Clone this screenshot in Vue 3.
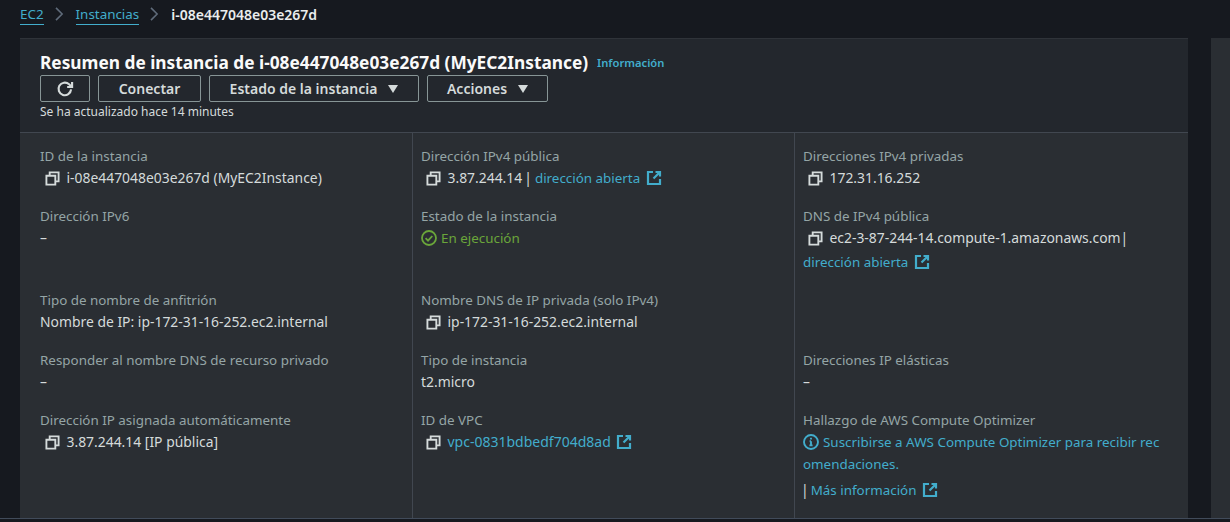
<script setup>
const columns = [
  [
    { label: 'ID de la instancia', value: 'i-08e447048e03e267d (MyEC2Instance)', copy: true },
    { label: 'Dirección IPv6', value: '–' },
    { label: 'Tipo de nombre de anfitrión', value: 'Nombre de IP: ip-172-31-16-252.ec2.internal' },
    { label: 'Responder al nombre DNS de recurso privado', value: '–' },
    { label: 'Dirección IP asignada automáticamente', value: '3.87.244.14 [IP pública]', copy: true },
  ],
  [
    { label: 'Dirección IPv4 pública', value: '3.87.244.14', copy: true, sep: true, link: 'dirección abierta' },
    { label: 'Estado de la instancia', status: 'En ejecución' },
    { label: 'Nombre DNS de IP privada (solo IPv4)', value: 'ip-172-31-16-252.ec2.internal', copy: true },
    { label: 'Tipo de instancia', value: 't2.micro' },
    { label: 'ID de VPC', copy: true, id: 'vpc-0831bdbedf704d8ad' },
  ],
  [
    { label: 'Direcciones IPv4 privadas', value: '172.31.16.252', copy: true },
    { label: 'DNS de IPv4 pública', value: 'ec2-3-87-244-14.compute-1.amazonaws.com', copy: true, sep: true, below: 'dirección abierta' },
    { empty: true },
    { label: 'Direcciones IP elásticas', value: '–' },
    { label: 'Hallazgo de AWS Compute Optimizer', optimizer: true },
  ],
]
</script>

<template>
  <div class="page">
    <nav class="crumbs">
      <a class="crumb">EC2</a>
      <svg class="chev" viewBox="0 0 10 16"><path d="M1 1l7 7-7 7" /></svg>
      <a class="crumb">Instancias</a>
      <svg class="chev" viewBox="0 0 10 16"><path d="M1 1l7 7-7 7" /></svg>
      <span class="current">i-08e447048e03e267d</span>
    </nav>

    <div class="main">
      <section class="card">
        <header class="head">
          <div class="title-row">
            <h1>Resumen de instancia de i-08e447048e03e267d (MyEC2Instance)</h1>
            <a class="info">Información</a>
          </div>
          <div class="actions">
            <button class="btn refresh" aria-label="Actualizar">
              <svg viewBox="0 0 16 16" width="18" height="18"><path d="M13.4 8.4A5.6 5.6 0 1 1 11.6 3.8L14 6" /><path d="M14.3 1.8V6.2H9.9" /></svg>
            </button>
            <button class="btn connect">Conectar</button>
            <button class="btn state">Estado de la instancia<i class="caret"></i></button>
            <button class="btn acts">Acciones<i class="caret"></i></button>
          </div>
          <p class="updated">Se ha actualizado hace 14 minutes</p>
        </header>

        <div class="details">
          <div v-for="(col, c) in columns" :key="c" class="col" :class="'col' + c">
            <div v-for="(f, i) in col" :key="i" class="field">
              <template v-if="!f.empty">
                <div class="label">{{ f.label }}</div>
                <div v-if="f.status" class="value status">
                  <svg viewBox="0 0 16 16" width="16" height="16"><circle cx="8" cy="8" r="7" /><path d="M4.6 8.2l2.4 2.4 4.3-4.6" /></svg>
                  {{ f.status }}
                </div>
                <template v-else-if="f.optimizer">
                  <div class="value link-line">
                    <svg class="info-ico" viewBox="0 0 16 16" width="16" height="16"><circle cx="8" cy="8" r="7" /><path d="M8 7.2v4M6.4 11.4h3.2M6.6 7.2H8" /><path d="M8 3.8v1.8" /></svg>
                    Suscribirse a AWS Compute Optimizer para recibir rec
                  </div>
                  <div class="value link-line second">omendaciones.</div>
                  <div class="value more">
                    <span class="bar">|</span><a class="link">Más información</a>
                    <svg class="ext" viewBox="0 0 16 16" width="16" height="16"><path d="M7 2H2v12h12V9" /><path d="M9.5 2H14v4.5M14 2L7.5 8.5" /></svg>
                  </div>
                </template>
                <template v-else>
                  <div class="value">
                    <svg v-if="f.copy" class="copy" viewBox="0 0 16 16" width="15" height="15"><path d="M1.5 5h9.5v9.5H1.5z" /><path d="M5 5V1.5h9.5V11H11" /></svg>
                    <span v-if="f.value">{{ f.value }}</span>
                    <span v-if="f.sep" class="bar" :class="{ spaced: f.link }">|</span>
                    <a v-if="f.link" class="link pad">{{ f.link }}</a>
                    <a v-if="f.id" class="link id">{{ f.id }}</a>
                    <svg v-if="f.link || f.id" class="ext" viewBox="0 0 16 16" width="16" height="16"><path d="M7 2H2v12h12V9" /><path d="M9.5 2H14v4.5M14 2L7.5 8.5" /></svg>
                  </div>
                  <div v-if="f.below" class="value below">
                    <a class="link">{{ f.below }}</a>
                    <svg class="ext" viewBox="0 0 16 16" width="16" height="16"><path d="M7 2H2v12h12V9" /><path d="M9.5 2H14v4.5M14 2L7.5 8.5" /></svg>
                  </div>
                </template>
              </template>
            </div>
          </div>
        </div>
      </section>
      <div class="gutter"></div>
      <div class="rail"></div>
    </div>
    <div class="bottom"></div>
  </div>
</template>

<style scoped>
.page {
  width: 1230px;
  height: 522px;
  overflow: hidden;
  background: #16191f;
  font-family: "Noto Sans", "Open Sans", sans-serif;
  font-size: 14px;
  color: #d5dbdb;
}

.crumbs {
  height: 38px;
  padding: 0 0 10px 20px;
  box-sizing: border-box;
  display: flex;
  align-items: center;
}

.crumb {
  color: #42adcc;
  font-size: 13.4px;
  line-height: 20px;
  border-bottom: 1px solid #42adcc;
}

.chev {
  width: 9px;
  height: 14px;
  margin: 0 12px 0 11px;
  fill: none;
  stroke: #5f6b7a;
  stroke-width: 1.8;
}

.current {
  font-weight: 600;
  color: #eaeded;
}

.main {
  display: flex;
  height: 480px;
}

.card {
  width: 1168px;
  margin-left: 20px;
  background: #2a2e33;
}

.gutter {
  width: 23px;
}

.rail {
  flex: 1;
  background: #2a2e33;
}

.bottom {
  height: 4px;
  background: #16191f;
  border-top: 1px solid #414b5a;
}

.head {
  height: 95px;
  box-sizing: border-box;
  padding: 11px 20px 0;
  background: #23272d;
  border-top: 1px solid #2f3339;
  border-bottom: 1px solid #414750;
}

.title-row {
  display: flex;
  align-items: center;
  height: 24px;
}

h1 {
  margin: 0;
  font-size: 17.3px;
  font-weight: 700;
  color: #fafafa;
  white-space: nowrap;
}

.info {
  margin-left: 9px;
  font-size: 11.2px;
  font-weight: 600;
  color: #42adcc;
}

.actions {
  display: flex;
  gap: 8px;
  margin-top: 1px;
}

.btn {
  height: 27px;
  box-sizing: border-box;
  background: transparent;
  border: 1px solid #879596;
  border-radius: 2px;
  color: #d5dbdb;
  font: 600 14px "Noto Sans", sans-serif;
  padding: 0;
  display: flex;
  align-items: center;
  justify-content: center;
}

.refresh { width: 50px; }
.connect { width: 103px; }
.state { width: 210px; }
.acts { width: 121px; }

.refresh svg {
  fill: none;
  stroke: #d5dbdb;
  stroke-width: 1.9;
}

.caret {
  margin-left: 11px;
  width: 0;
  height: 0;
  border-left: 5.5px solid transparent;
  border-right: 5.5px solid transparent;
  border-top: 8px solid #d5dbdb;
}

.updated {
  margin: 2px 0 0;
  font-size: 12px;
  line-height: 16px;
  color: #d5dbdb;
}

.details {
  display: grid;
  grid-template-columns: 392px 382px 394px;
  height: 385px;
}

.col {
  display: grid;
  grid-template-rows: 60px 84px 60px 60px auto;
  padding-top: 13px;
}

.col0 { padding-left: 20px; }
.col1, .col2 {
  padding-left: 8px;
  border-left: 1px solid #414750;
}

.label {
  color: #95a5a6;
  font-size: 13.4px;
  line-height: 20px;
}

.value {
  display: flex;
  align-items: center;
  white-space: nowrap;
  line-height: 24px;
  font-size: 13.9px;
}

.link-line,
.link {
  color: #42adcc;
  font-size: 13.4px;
}

.link.id {
  font-size: 14px;
}

.link.pad {
  margin-left: 3px;
}

.second {
  line-height: 20px;
}

.more {
  margin-top: 4px;
}

.copy {
  margin: 0 6.5px 0 5px;
  fill: none;
  stroke: #d5dbdb;
  stroke-width: 2;
  flex: none;
}

.ext {
  margin-left: 5.5px;
  fill: none;
  stroke: #42adcc;
  stroke-width: 2.2;
  flex: none;
}

.status {
  color: #6aa63a;
  font-size: 13.4px;
}

.status svg {
  margin-right: 4px;
  fill: none;
  stroke: #6aa63a;
  stroke-width: 1.8;
}

.info-ico {
  margin-right: 4px;
  fill: none;
  stroke: #42adcc;
  stroke-width: 1.9;
}

.bar.spaced {
  margin-left: 2px;
}

.more .bar {
  margin: 0 2px 0 -2px;
}
</style>

<style>
body {
  background: #16191f;
}
</style>
